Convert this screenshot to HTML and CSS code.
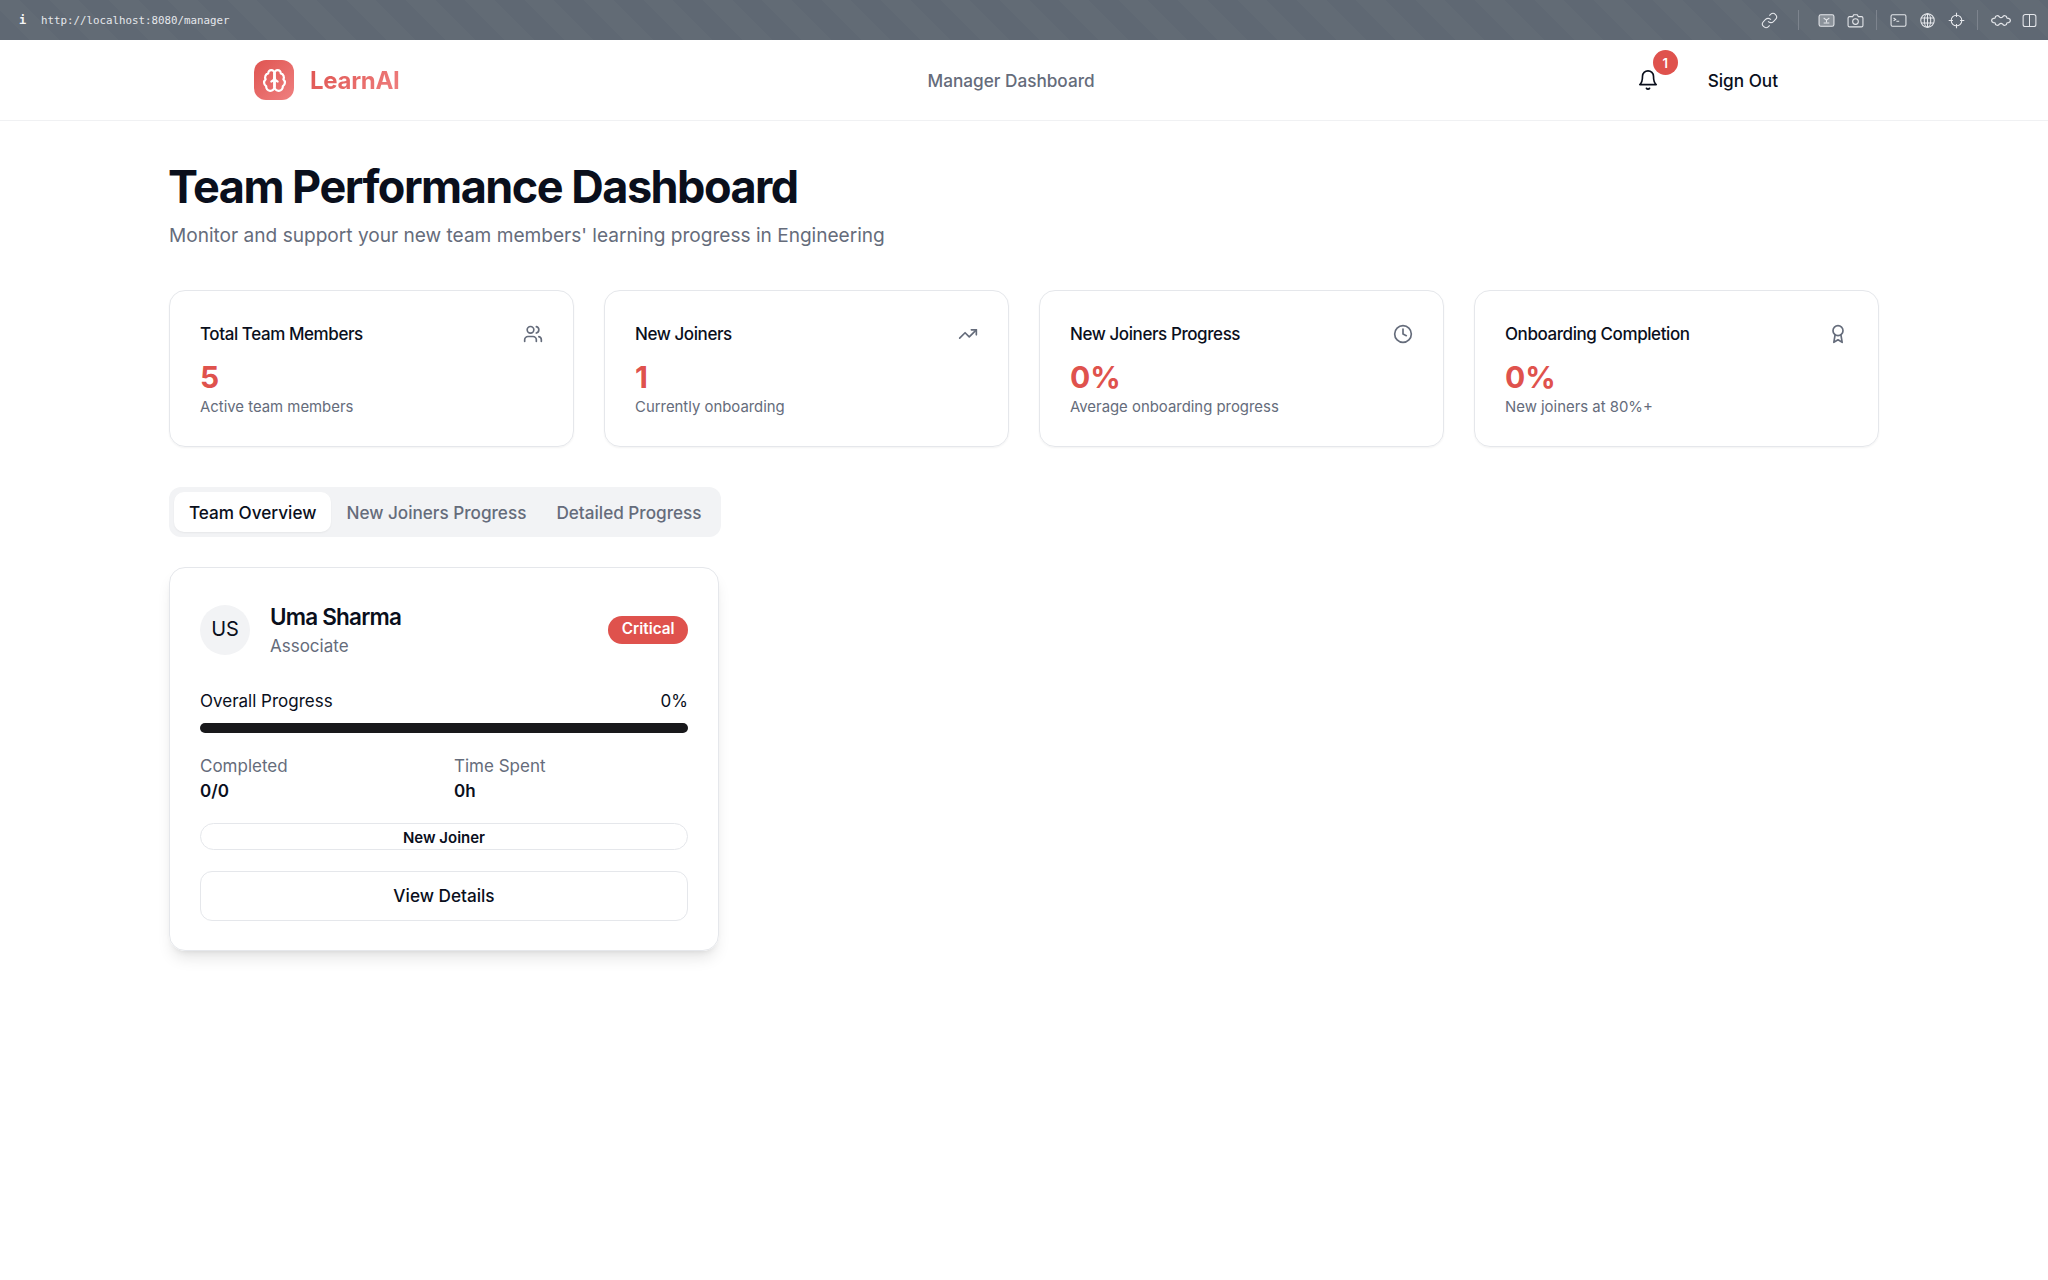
FILE: index.html
```html
<!DOCTYPE html>
<html lang="en">
<head>
    <meta charset="UTF-8">
    <meta name="viewport" content="width=device-width, initial-scale=1.0">
    <title>Team Performance Dashboard</title>
    <link rel="stylesheet" href="styles.css">
</head>
<body>

<!-- Browser toolbar -->
<div class="toolbar">
    <div class="toolbar-left">
        <span class="info-mark">i</span>
        <span class="url">http://localhost:8080/manager</span>
    </div>
    <div class="toolbar-right">
        <svg class="tool-icon" viewBox="0 0 24 24"><path d="M10 13a5 5 0 0 0 7.54.54l3-3a5 5 0 0 0-7.07-7.07l-1.72 1.71"/><path d="M14 11a5 5 0 0 0-7.54-.54l-3 3a5 5 0 0 0 7.07 7.07l1.71-1.71"/></svg>
        <span class="tool-sep tool-sep-first"></span>
        <svg class="tool-icon" viewBox="0 0 24 24"><rect x="1.500" y="4" width="21" height="16" rx="2.500" fill="#8b929a"/><path d="M8 8.500l4 3 4-3M12 11.500v3M8 15.500h8"/></svg>
        <svg class="tool-icon" viewBox="0 0 24 24"><path d="M3.500 6.500H8L9.500 4h5L16 6.500h4.500a2 2 0 0 1 2 2V19a2 2 0 0 1-2 2h-17a2 2 0 0 1-2-2V8.500a2 2 0 0 1 2-2z"/><circle cx="12" cy="13.500" r="4"/></svg>
        <span class="tool-sep"></span>
        <svg class="tool-icon" viewBox="0 0 24 24"><rect x="1.500" y="4" width="21" height="16" rx="2"/><path d="M5 8.500l3 2-3 2M9 13h4"/></svg>
        <svg class="tool-icon" viewBox="0 0 24 24"><circle cx="12" cy="12" r="9.500"/><ellipse cx="12" cy="12" rx="4.500" ry="9.500"/><path d="M3 8.500h18M3 15.500h18M12 2.500v19"/></svg>
        <svg class="tool-icon" viewBox="0 0 24 24"><circle cx="12" cy="12" r="7.500"/><path d="M12 1v6M12 17v6M1 12h6M17 12h6"/></svg>
        <span class="tool-sep"></span>
        <svg class="tool-icon tool-wide" viewBox="0 0 24 24" preserveAspectRatio="none"><path d="M5 8C5 5 9 4 10 7C11 8 13 8 14 7C15 4 19 5 19 8C19 9 20 9 21 9C24 10 24 14 21 15C20 15 19 15 19 16C19 19 15 20 14 17C13 16 11 16 10 17C9 20 5 19 5 16C5 15 4 15 3 15C0 14 0 10 3 9C4 9 5 9 5 8Z"/></svg>
        <svg class="tool-icon" viewBox="0 0 24 24"><rect x="3" y="3.500" width="18" height="17" rx="3"/><path d="M12 3.500v17"/></svg>
    </div>
</div>

<!-- Site header -->
<header class="site-header">
    <div class="brand">
        <div class="brand-icon">
            <svg viewBox="0 0 24 24"><path d="M12 5a3 3 0 1 0-5.997.125 4 4 0 0 0-2.526 5.77 4 4 0 0 0 .556 6.588A4 4 0 1 0 12 18Z"/><path d="M12 5a3 3 0 1 1 5.997.125 4 4 0 0 1 2.526 5.77 4 4 0 0 1-.556 6.588A4 4 0 1 1 12 18Z"/><path d="M15 13a4.500 4.500 0 0 1-3-4 4.500 4.500 0 0 1-3 4"/><path d="M12 18V5"/></svg>
        </div>
        <span class="brand-name">LearnAI</span>
    </div>
    <nav class="main-nav">Manager Dashboard</nav>
    <div class="header-actions">
        <button class="bell-btn">
            <svg class="bell-icon" viewBox="0 0 24 24"><path d="M6 8a6 6 0 0 1 12 0c0 7 3 9 3 9H3s3-2 3-9"/><path d="M10.300 21a1.940 1.940 0 0 0 3.400 0"/></svg>
            <span class="bell-count">1</span>
        </button>
        <button class="sign-out">Sign Out</button>
    </div>
</header>

<main class="container">
    <h1>Team Performance Dashboard</h1>
    <p class="subtitle">Monitor and support your new team members' learning progress in Engineering</p>

    <section class="stats">
        <div class="stat-card">
            <div class="stat-top">
                <span class="stat-title">Total Team Members</span>
                <svg class="stat-icon" viewBox="0 0 24 24"><path d="M16 21v-2a4 4 0 0 0-4-4H6a4 4 0 0 0-4 4v2"/><circle cx="9" cy="7" r="4"/><path d="M22 21v-2a4 4 0 0 0-3-3.870"/><path d="M16 3.130a4 4 0 0 1 0 7.750"/></svg>
            </div>
            <div class="stat-value">5</div>
            <div class="stat-note">Active team members</div>
        </div>
        <div class="stat-card">
            <div class="stat-top">
                <span class="stat-title">New Joiners</span>
                <svg class="stat-icon" viewBox="0 0 24 24"><polyline points="22 7 13.500 15.500 8.500 10.500 2 17"/><polyline points="16 7 22 7 22 13"/></svg>
            </div>
            <div class="stat-value">1</div>
            <div class="stat-note">Currently onboarding</div>
        </div>
        <div class="stat-card">
            <div class="stat-top">
                <span class="stat-title">New Joiners Progress</span>
                <svg class="stat-icon" viewBox="0 0 24 24"><circle cx="12" cy="12" r="10"/><polyline points="12 6 12 12 16 14"/></svg>
            </div>
            <div class="stat-value">0%</div>
            <div class="stat-note">Average onboarding progress</div>
        </div>
        <div class="stat-card">
            <div class="stat-top">
                <span class="stat-title">Onboarding Completion</span>
                <svg class="stat-icon" viewBox="0 0 24 24"><circle cx="12" cy="8" r="6"/><path d="M15.477 12.890 17 22l-5-3-5 3 1.523-9.110"/></svg>
            </div>
            <div class="stat-value">0%</div>
            <div class="stat-note">New joiners at 80%+</div>
        </div>
    </section>

    <div class="tabs">
        <button class="tab active">Team Overview</button>
        <button class="tab">New Joiners Progress</button>
        <button class="tab">Detailed Progress</button>
    </div>

    <section class="member-card">
        <div class="member-head">
            <div class="avatar">US</div>
            <div class="member-info">
                <div class="member-name">Uma Sharma</div>
                <div class="member-role">Associate</div>
            </div>
            <span class="badge-critical">Critical</span>
        </div>

        <div class="progress-row">
            <span>Overall Progress</span>
            <span>0%</span>
        </div>
        <div class="progress-bar"></div>

        <div class="member-stats">
            <div>
                <div class="metric-label">Completed</div>
                <div class="metric-value">0/0</div>
            </div>
            <div>
                <div class="metric-label">Time Spent</div>
                <div class="metric-value">0h</div>
            </div>
        </div>

        <div class="joiner-pill">New Joiner</div>
        <button class="details-btn">View Details</button>
    </section>
</main>

</body>
</html>
```

FILE: styles.css
```css
* {
    box-sizing: border-box;
}

body {
    margin: 0;
    min-height: 1280px;
    background-color: #fff;
    color: #0a0f1c;
    font-family: Inter, "Liberation Sans", sans-serif;
}

button {
    font-family: inherit;
    cursor: pointer;
}

/* Browser toolbar */
.toolbar {
    height: 40px;
    display: flex;
    justify-content: space-between;
    align-items: center;
    padding: 0 10px 0 19px;
    background-color: #5f6873;
    background-image: repeating-linear-gradient(45deg, #5f6873 0, #5f6873 21px, #626b75 21px, #626b75 42px);
}

.toolbar-left {
    display: flex;
    align-items: center;
}

.info-mark {
    width: 22px;
    color: #f3f4f6;
    font-family: "DejaVu Sans Mono", monospace;
    font-size: 12px;
    font-weight: bold;
}

.url {
    color: #e5e7eb;
    font-family: "DejaVu Sans Mono", monospace;
    font-size: 10.800px;
}

.toolbar-right {
    display: flex;
    align-items: center;
}

.tool-icon {
    width: 17px;
    height: 17px;
    margin-left: 12px;
    fill: none;
    stroke: #e5e7eb;
    stroke-width: 1.500;
}

.tool-wide {
    width: 20px;
    margin-right: -2px;
}

.tool-sep {
    width: 1px;
    height: 20px;
    margin: 0 1px 0 12px;
    background-color: #7d848e;
}

.tool-sep-first {
    margin: 0 7px 0 20px;
}

/* Site header */
.site-header {
    height: 81px;
    display: flex;
    justify-content: space-between;
    align-items: center;
    padding: 0 254px;
    border-bottom: 1px solid #f0f1f3;
}

.brand {
    display: flex;
    align-items: center;
    gap: 16px;
}

.brand-icon {
    width: 40px;
    height: 40px;
    display: flex;
    justify-content: center;
    align-items: center;
    border-radius: 12px;
    background: linear-gradient(135deg, #df5450, #ef8080);
}

.brand-icon svg {
    width: 25px;
    height: 25px;
    fill: none;
    stroke: #fff;
    stroke-width: 2.100;
    stroke-linecap: round;
    stroke-linejoin: round;
}

.brand-name {
    font-size: 24px;
    line-height: 32px;
    margin-top: 1px;
    font-weight: 700;
    letter-spacing: -0.300px;
    background: linear-gradient(135deg, #df5450, #ef8080);
    -webkit-background-clip: text;
    background-clip: text;
    color: transparent;
}

.main-nav {
    margin-right: 5px;
    color: #656c7b;
    font-size: 17.200px;
    font-weight: 500;
}

.header-actions {
    display: flex;
    align-items: center;
    gap: 24px;
}

.bell-btn {
    position: relative;
    width: 40px;
    height: 40px;
    display: flex;
    justify-content: center;
    align-items: center;
    padding: 0;
    border: none;
    background: none;
}

.bell-icon {
    width: 22px;
    height: 22px;
    fill: none;
    stroke: #0a0f1c;
    stroke-width: 1.800;
    stroke-linecap: round;
    stroke-linejoin: round;
}

.bell-count {
    position: absolute;
    top: -10px;
    right: -10px;
    width: 25px;
    height: 25px;
    display: flex;
    justify-content: center;
    align-items: center;
    border-radius: 50%;
    background-color: #df524d;
    color: #fff;
    font-size: 13px;
    font-weight: 600;
}

.sign-out {
    height: 40px;
    padding: 0 16px;
    border: none;
    background: none;
    color: #0a0f1c;
    font-size: 17.200px;
    font-weight: 500;
}

/* Page content */
.container {
    width: 1710px;
    margin: 0 auto;
    padding-top: 42px;
}

h1 {
    margin: 0 0 0 -1px;
    font-size: 45px;
    line-height: 48px;
    font-weight: 700;
    letter-spacing: -1.500px;
}

.subtitle {
    margin: 11px 0 0;
    color: #656c7b;
    font-size: 19.080px;
    line-height: 28px;
}

.stats {
    display: grid;
    grid-template-columns: repeat(4, 1fr);
    gap: 30px;
    margin-top: 40px;
}

.stat-card {
    height: 157px;
    padding: 31px 30px 30px;
    border: 1px solid #e5e7eb;
    border-radius: 16px;
    box-shadow: 0 1px 2px rgba(0, 0, 0, 0.05);
}

.stat-top {
    display: flex;
    justify-content: space-between;
    align-items: center;
    height: 24px;
}

.stat-title {
    font-size: 17px;
    font-weight: 500;
    letter-spacing: -0.420px;
}

.stat-icon {
    width: 20px;
    height: 20px;
    fill: none;
    stroke: #656c7b;
    stroke-width: 2;
    stroke-linecap: round;
    stroke-linejoin: round;
}

.stat-value {
    margin-top: 13px;
    color: #df524d;
    font-size: 30px;
    line-height: 36px;
    font-weight: 700;
}

.stat-note {
    margin-top: 2px;
    color: #656c7b;
    font-size: 14.900px;
    line-height: 20px;
}

.tabs {
    display: inline-flex;
    gap: 0;
    margin-top: 40px;
    padding: 5px;
    border-radius: 12px;
    background-color: #f2f3f5;
}

.tab {
    height: 40px;
    padding: 1px 15px 0;
    border: none;
    border-radius: 10px;
    background: none;
    color: #656c7b;
    font-size: 17.150px;
    font-weight: 500;
}

.tab.active {
    background-color: #fff;
    color: #0a0f1c;
    box-shadow: 0 1px 2px rgba(0, 0, 0, 0.05);
}

.member-card {
    width: 550px;
    height: 384px;
    margin-top: 30px;
    padding: 30px;
    border: 1px solid #e5e7eb;
    border-radius: 16px;
    box-shadow: 0 10px 15px -3px rgba(0, 0, 0, 0.1), 0 4px 6px -4px rgba(0, 0, 0, 0.1);
}

.member-head {
    display: flex;
    align-items: center;
    gap: 20px;
    height: 63px;
}

.avatar {
    width: 50px;
    height: 50px;
    display: flex;
    justify-content: center;
    align-items: center;
    padding-bottom: 2px;
    border-radius: 50%;
    background-color: #f2f3f5;
    font-size: 20px;
}

.member-info {
    flex: 1;
}

.member-name {
    font-size: 22.500px;
    line-height: 30px;
    font-weight: 600;
    letter-spacing: -0.800px;
}

.member-role {
    margin-top: 2px;
    color: #656c7b;
    font-size: 17px;
    line-height: 24px;
}

.badge-critical {
    padding: 3px 13.500px 5px;
    border-radius: 14px;
    background-color: #df524d;
    color: #fff;
    font-size: 15.300px;
    line-height: 20px;
    font-weight: 600;
}

.progress-row {
    display: flex;
    justify-content: space-between;
    margin-top: 28px;
    font-size: 17px;
    line-height: 24px;
}

.progress-bar {
    height: 10px;
    margin-top: 10px;
    border-radius: 5px;
    background-color: #18181b;
}

.member-stats {
    display: grid;
    grid-template-columns: 1fr 1fr;
    gap: 20px;
    margin-top: 21px;
}

.metric-label {
    color: #656c7b;
    font-size: 17px;
    line-height: 24px;
}

.metric-value {
    margin-top: 1px;
    font-size: 17px;
    line-height: 24px;
    font-weight: 600;
}

.joiner-pill {
    height: 27px;
    margin-top: 20px;
    border: 1px solid #e5e7eb;
    border-radius: 14px;
    font-size: 15px;
    line-height: 27px;
    font-weight: 600;
    text-align: center;
}

.details-btn {
    width: 100%;
    height: 50px;
    margin-top: 21px;
    padding-bottom: 2px;
    border: 1px solid #e5e7eb;
    border-radius: 12px;
    background: #fff;
    color: #0a0f1c;
    font-size: 17.200px;
    font-weight: 500;
}
```
